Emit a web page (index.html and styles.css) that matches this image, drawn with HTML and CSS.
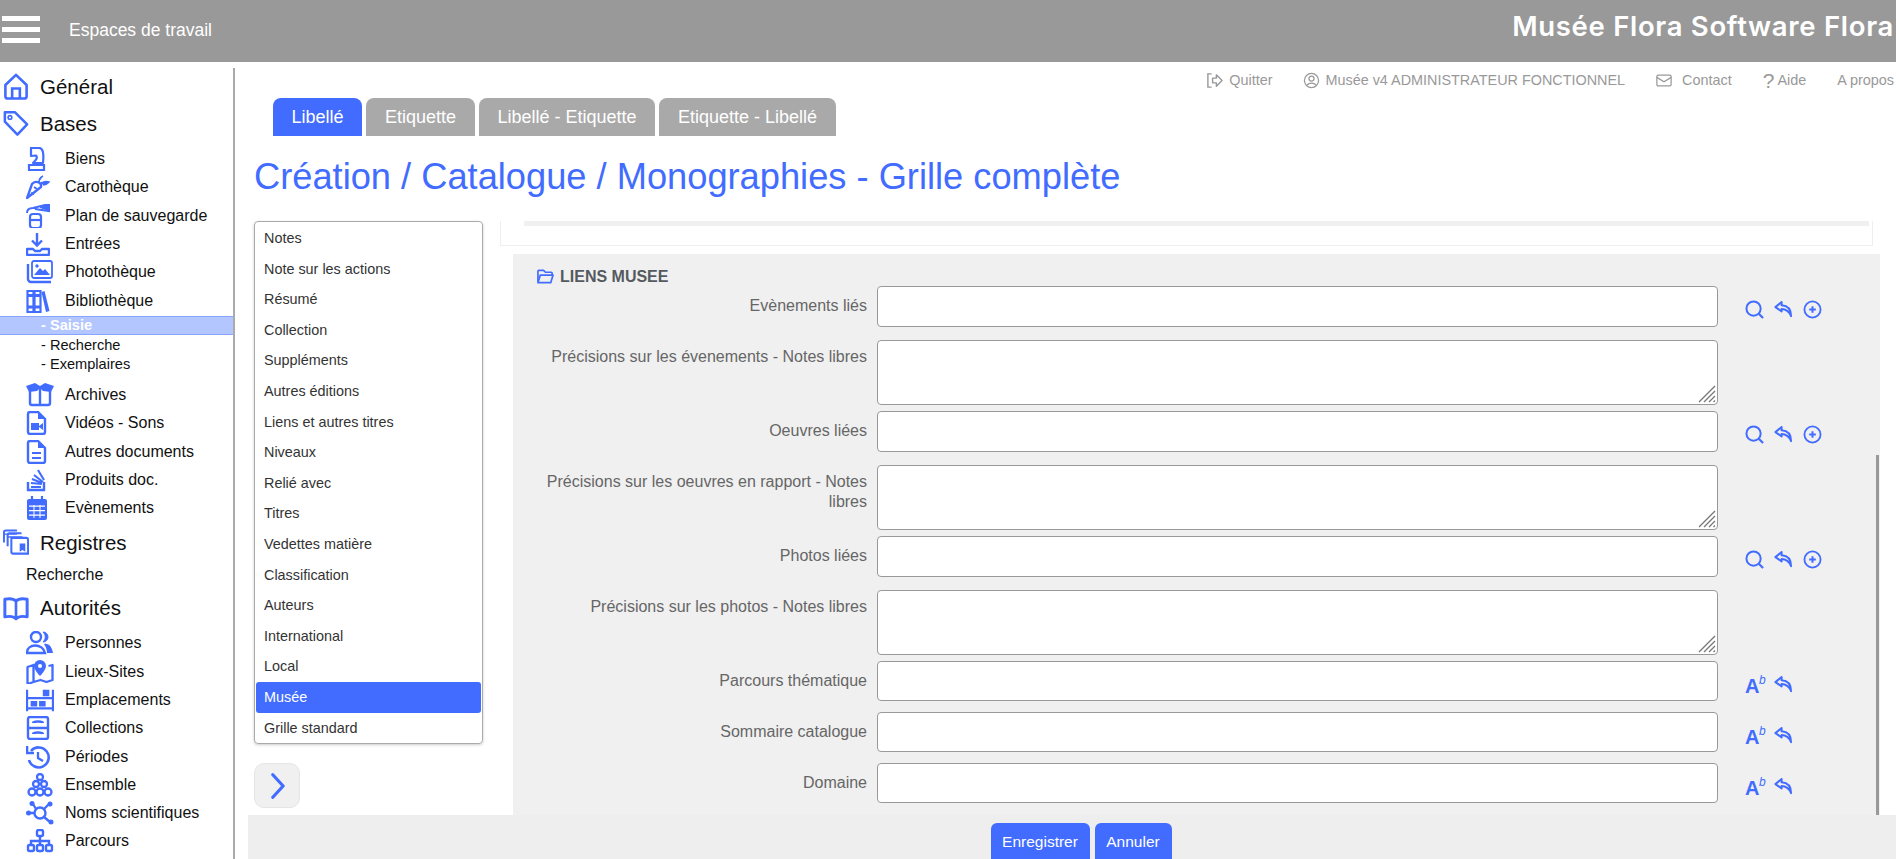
FILE: index.html
```html
<!DOCTYPE html>
<html lang="fr">
<head>
<meta charset="utf-8">
<title>Musée Flora</title>
<link rel="stylesheet" href="styles.css">
</head>
<body>
<svg class="defs" width="0" height="0">
  <symbol id="i-loupe" viewBox="0 0 20 20"><circle cx="9" cy="9" r="7.500" fill="none" stroke="currentColor" stroke-width="2.100"/><path d="M14.500 14.500 19 19" stroke="currentColor" stroke-width="2.400" fill="none"/></symbol>
  <symbol id="i-undo" viewBox="0 0 20 20"><path d="M8 2 1.500 7.500 8 12V9.500c4.500 0 7.500 1.500 10 7.500 0-6.500-3-11-10-11.500Z" fill="none" stroke="currentColor" stroke-width="2.100" stroke-linejoin="round"/></symbol>
  <symbol id="i-plus" viewBox="0 0 20 20"><circle cx="10" cy="10" r="8.500" fill="none" stroke="currentColor" stroke-width="1.900"/><path d="M10 6.500v7M6.500 10h7" stroke="currentColor" stroke-width="2.100"/></symbol>
</svg>

<header class="topbar">
  <div class="burger"><span></span><span></span><span></span></div>
  <div class="workspaces">Espaces de travail</div>
  <div class="brand">Musée Flora Software Flora</div>
</header>

<div class="page">
  <nav class="sidebar">
    <div class="sec">
      <svg class="sec-ico" viewBox="0 0 26 28"><path d="M2 12.500 13 2l11 10.500V24a2.500 2.500 0 0 1-2.500 2.500h-17A2.500 2.500 0 0 1 2 24Z" fill="none" stroke="currentColor" stroke-width="2.700" stroke-linejoin="round"/><path d="M9 26V16h8v10" fill="none" stroke="currentColor" stroke-width="2.700"/></svg>
      <span>Général</span>
    </div>
    <div class="sec">
      <svg class="sec-ico" viewBox="0 0 28 28"><path d="M2 2h11l13 13-10.500 11L2 12Z" fill="none" stroke="currentColor" stroke-width="2.700" stroke-linejoin="round"/><circle cx="7.500" cy="7.500" r="2" fill="none" stroke="currentColor" stroke-width="1.700"/></svg>
      <span>Bases</span>
    </div>
    <ul class="sub s1">
      <li><svg class="ico" viewBox="0 0 24 24"><path d="M5 1h8c4 0 5 5 4 15H7c3-3 5-5 3-7.500L5 9Z" fill="none" stroke="currentColor" stroke-width="2.200" stroke-linejoin="round"/><path d="M3 18h15v5H3Z" fill="none" stroke="currentColor" stroke-width="2.200"/></svg>Biens</li>
      <li><svg class="ico" viewBox="0 0 24 24"><path d="M1 23 6 9c3-4 10-2 9 3Z" fill="none" stroke="currentColor" stroke-width="2.300" stroke-linejoin="round"/><path d="M13 7c0-3 2-5 4-6M15 8c2-1 5-2 8-1-1 1-2 3-6 3" fill="currentColor" stroke="currentColor" stroke-width="1.500"/><path d="M8 12l3 2M5 18l3 1" stroke="currentColor" stroke-width="2" fill="none"/></svg>Carothèque</li>
      <li><svg class="ico" viewBox="0 0 24 24"><rect x="4" y="10" width="11" height="14" rx="3" fill="none" stroke="currentColor" stroke-width="2.200"/><path d="M4 16h11" stroke="currentColor" stroke-width="2.200"/><path d="M1 9c0-4 3-5 6-5l16-4v7L9 5" fill="none" stroke="currentColor" stroke-width="2"/><path d="M14 3l9-3v7l-9-3Z" fill="currentColor"/></svg>Plan de sauvegarde</li>
      <li><svg class="ico" viewBox="0 0 24 24"><path d="M11 1v12M6 8.500l5 5 5-5" fill="none" stroke="currentColor" stroke-width="2.400"/><path d="M1 17h6l2 2h5l2-2h7v5a1 1 0 0 1-1 1H2a1 1 0 0 1-1-1Z" fill="none" stroke="currentColor" stroke-width="2.400" stroke-linejoin="round"/></svg>Entrées</li>
      <li><svg class="ico wide" viewBox="0 0 28 24"><rect x="6" y="1" width="20" height="17" rx="2" fill="none" stroke="currentColor" stroke-width="1.800"/><path d="M8 15l6-7 3 3 2-2 5 6Z" fill="currentColor"/><circle cx="11" cy="6" r="1.700" fill="currentColor"/><path d="M2 4v15a3 3 0 0 0 3 3h20" fill="none" stroke="currentColor" stroke-width="2.400"/></svg>Photothèque</li>
      <li><svg class="ico" viewBox="0 0 24 24"><path d="M1.500 2h6v21h-6ZM8.500 2h6v21h-6Z" fill="none" stroke="currentColor" stroke-width="2.200"/><path d="M1 6.500h14M1 18h14" stroke="currentColor" stroke-width="2.800"/><path d="M15.500 3l3-1 5 20-3.500 1Z" fill="currentColor"/></svg>Bibliothèque</li>
    </ul>
    <ul class="tree">
      <li class="on">- Saisie</li>
      <li>- Recherche</li>
      <li>- Exemplaires</li>
    </ul>
    <ul class="sub s2">
      <li><svg class="ico wide" viewBox="0 0 28 24"><path d="M0 3 9 0l5 3 5-3 9 3-3 6-8-1-3-3-3 3-8 1Z" fill="currentColor"/><path d="M4 8v12a2 2 0 0 0 2 2h16a2 2 0 0 0 2-2V8M14 5v17" fill="none" stroke="currentColor" stroke-width="2.400"/></svg>Archives</li>
      <li><svg class="ico" viewBox="0 0 24 24"><path d="M2 3a2 2 0 0 1 2-2h8l7 7v13a2 2 0 0 1-2 2H4a2 2 0 0 1-2-2Z" fill="none" stroke="currentColor" stroke-width="2.400"/><path d="M12 1v7h7" fill="currentColor"/><path d="M5 12h8v7H5ZM13 15l4-3v7l-4-3Z" fill="currentColor"/></svg>Vidéos - Sons</li>
      <li><svg class="ico" viewBox="0 0 24 24"><path d="M2 3a2 2 0 0 1 2-2h8l7 7v13a2 2 0 0 1-2 2H4a2 2 0 0 1-2-2Z" fill="none" stroke="currentColor" stroke-width="2.400"/><path d="M12 1v7h7" fill="currentColor"/><path d="M6 13h9M6 18h9" stroke="currentColor" stroke-width="2.200"/></svg>Autres documents</li>
      <li><svg class="ico" viewBox="0 0 24 24"><path d="M2 14v8h16v-8" fill="none" stroke="currentColor" stroke-width="2.400"/><path d="M5 19h10M5 15l11 1M6 11l10 4M8 7l9 7M12 2l6 10" stroke="currentColor" stroke-width="2.100" fill="none"/></svg>Produits doc.</li>
      <li><svg class="ico" viewBox="0 0 24 24"><path d="M1 5a2 2 0 0 1 2-2h16a2 2 0 0 1 2 2v17a2 2 0 0 1-2 2H3a2 2 0 0 1-2-2Z" fill="currentColor"/><path d="M6 0v5M16 0v5" stroke="currentColor" stroke-width="2.200"/><path d="M3 9.500h16v1.200H3ZM3 14h16v1.200H3ZM3 18.500h16v1.200H3ZM7.500 9h1v13h-1ZM13.500 9h1v13h-1Z" fill="#fff"/></svg>Evènements</li>
    </ul>
    <div class="sec sec-reg">
      <svg class="sec-ico" viewBox="0 0 28 28"><path d="M1 14V3a2 2 0 0 1 2-2h12M5 18V6a2 2 0 0 1 2-2h13M9 9h16a2 2 0 0 1 2 2v15H11a2 2 0 0 1-2-2Z" fill="none" stroke="currentColor" stroke-width="2.200"/><path d="M5 8h16M1 5h14" stroke="currentColor" stroke-width="1.500"/><path d="M18 15h6v9l-3-2-3 2Z" fill="currentColor"/></svg>
      <span>Registres</span>
    </div>
    <div class="plain">Recherche</div>
    <div class="sec sec-aut">
      <svg class="sec-ico" viewBox="0 0 28 26"><path d="M2 3c5-1 9-1 12 2 3-3 7-3 12-2v19c-5-1-9-1-12 2-3-3-7-3-12-2Z" fill="none" stroke="currentColor" stroke-width="3.200" stroke-linejoin="round"/><path d="M14 5v19" stroke="currentColor" stroke-width="2.800"/></svg>
      <span>Autorités</span>
    </div>
    <ul class="sub s3">
      <li><svg class="ico wide" viewBox="0 0 28 24"><circle cx="10" cy="6" r="5" fill="none" stroke="currentColor" stroke-width="2.400"/><path d="M17 1a5 5 0 0 1 0 10c3-3 3-7 0-10Z" fill="currentColor" stroke="currentColor"/><path d="M1 22c0-10 16-10 18 0Z" fill="none" stroke="currentColor" stroke-width="2.400"/><path d="M18 13c5-1 8 3 9 9h-6c0-3-1-6-3-9Z" fill="currentColor"/></svg>Personnes</li>
      <li><svg class="ico wide" viewBox="0 0 28 24"><path d="M1.500 7l6-2v17l-6 2ZM7.500 22l7-2 6 2 6-2V5l-4 1M7.500 5l3 1" fill="none" stroke="currentColor" stroke-width="2.300" stroke-linejoin="round"/><path d="M14 0a6 6 0 0 1 6 6c0 4-6 10-6 10S8 10 8 6a6 6 0 0 1 6-6Z" fill="currentColor"/><circle cx="14" cy="6" r="2" fill="#fff"/></svg>Lieux-Sites</li>
      <li><svg class="ico wide" viewBox="0 0 30 24"><path d="M1 1v23M29 1v23M1 10h28M1 21h28" stroke="currentColor" stroke-width="2.600" fill="none"/><path d="M5 13h7v6H5ZM14 13h7v6h-7ZM18 1h7v7h-7Z" fill="currentColor"/></svg>Emplacements</li>
      <li><svg class="ico" viewBox="0 0 24 24"><rect x="2" y="1" width="20" height="22" rx="2" fill="none" stroke="currentColor" stroke-width="2.400"/><path d="M2 12h20M7 7c0-2 10-2 10 0M7 18c0-2 10-2 10 0" fill="none" stroke="currentColor" stroke-width="2.300"/></svg>Collections</li>
      <li><svg class="ico" viewBox="0 0 24 24"><path d="M5 6a10 10 0 1 1-2 9" fill="none" stroke="currentColor" stroke-width="2.600"/><path d="M1 1v7h7" fill="none" stroke="currentColor" stroke-width="2.600"/><path d="M12 7v6l5 3" fill="none" stroke="currentColor" stroke-width="2.300"/></svg>Périodes</li>
      <li><svg class="ico wide" viewBox="0 0 26 24"><g fill="none" stroke="currentColor" stroke-width="2.300"><circle cx="13" cy="4" r="3"/><circle cx="9" cy="11" r="3"/><circle cx="17" cy="11" r="3"/><circle cx="5" cy="19" r="3.500"/><circle cx="13" cy="19" r="3.500"/><circle cx="21" cy="19" r="3.500"/></g></svg>Ensemble</li>
      <li><svg class="ico wide" viewBox="0 0 28 24"><circle cx="14" cy="12" r="5.500" fill="none" stroke="currentColor" stroke-width="2.400"/><path d="M3 12h6M10 8 7 3M18 8l5-5M18 16l6 5" stroke="currentColor" stroke-width="2.300"/><circle cx="2.500" cy="12" r="2.500" fill="currentColor"/><circle cx="6" cy="2.500" r="2.500" fill="currentColor"/><circle cx="24" cy="3" r="2.500" fill="currentColor"/><circle cx="25" cy="21" r="2.500" fill="currentColor"/></svg>Noms scientifiques</li>
      <li><svg class="ico wide" viewBox="0 0 26 24"><g fill="none" stroke="currentColor" stroke-width="2.400"><rect x="10" y="1" width="6" height="6" rx="1.500"/><rect x="1" y="16" width="6" height="6" rx="1.500"/><rect x="10" y="16" width="6" height="6" rx="1.500"/><rect x="19" y="16" width="6" height="6" rx="1.500"/><path d="M13 7v9M4 16v-4h18v4"/></g></svg>Parcours</li>
    </ul>
  </nav>

  <main class="main">
    <div class="toplinks">
      <span class="tl"><svg class="tl-ico quit" viewBox="0 0 18 18"><path d="M6 2H2v14h4" fill="none" stroke="currentColor" stroke-width="1.500"/><path d="M7 6.500h4V3l6 6-6 6v-3.500H7Z" fill="none" stroke="currentColor" stroke-width="1.500" stroke-linejoin="round"/></svg>Quitter</span>
      <span class="tl"><svg class="tl-ico" viewBox="0 0 18 18"><circle cx="9" cy="9" r="7.500" fill="none" stroke="currentColor" stroke-width="1.300"/><circle cx="9" cy="7" r="2.700" fill="none" stroke="currentColor" stroke-width="1.300"/><path d="M4.500 14c1-3 8-3 9 0" fill="none" stroke="currentColor" stroke-width="1.300"/></svg>Musée v4 ADMINISTRATEUR FONCTIONNEL</span>
      <span class="tl"><svg class="tl-ico mail" viewBox="0 0 18 14"><rect x="1" y="1" width="16" height="12" rx="1.500" fill="none" stroke="currentColor" stroke-width="1.400"/><path d="M1 3.500 9 8.500l8-5" fill="none" stroke="currentColor" stroke-width="1.400"/></svg>Contact</span>
      <span class="tl"><span class="q">?</span>Aide</span>
      <span class="tl">A propos</span>
    </div>

    <div class="tabs">
      <span class="tab on">Libellé</span>
      <span class="tab t2">Etiquette</span>
      <span class="tab t3">Libellé - Etiquette</span>
      <span class="tab t4">Etiquette - Libellé</span>
    </div>

    <h1 class="title">Création / Catalogue / Monographies - Grille complète</h1>

    <div class="work">
      <aside class="leftcol">
        <ul class="list">
          <li>Notes</li><li>Note sur les actions</li><li>Résumé</li><li>Collection</li><li>Suppléments</li>
          <li>Autres éditions</li><li>Liens et autres titres</li><li>Niveaux</li><li>Relié avec</li><li>Titres</li>
          <li>Vedettes matière</li><li>Classification</li><li>Auteurs</li><li>International</li><li>Local</li>
          <li class="on">Musée</li><li>Grille standard</li>
        </ul>
        <div class="next"><svg viewBox="0 0 16 28" width="15" height="28"><path d="M3 2l11 12L3 26" fill="none" stroke="currentColor" stroke-width="3.400" stroke-linecap="round" stroke-linejoin="round"/></svg></div>
      </aside>

      <section class="right">
        <div class="prevbox"><div class="prevbar"></div></div>
        <div class="panel">
          <div class="legend"><svg class="folder" viewBox="0 0 18 15"><path d="M1 13V2a1 1 0 0 1 1-1h5l2 2h6a1 1 0 0 1 1 1v2" fill="none" stroke="currentColor" stroke-width="1.800"/><path d="M1 14l2.500-8H17l-2.500 8Z" fill="none" stroke="currentColor" stroke-width="1.800" stroke-linejoin="round"/></svg>LIENS MUSEE</div>
          <div class="scroll"></div>

          <div class="row"><label>Evènements liés</label><div class="field"></div>
            <div class="acts"><svg><use href="#i-loupe"/></svg><svg><use href="#i-undo"/></svg><svg><use href="#i-plus"/></svg></div></div>
          <div class="row ta"><label>Précisions sur les évenements - Notes libres</label><div class="field area"><svg class="grip" viewBox="0 0 18 18"><path d="M1 17 17 1M6 17 17 6M11 17l6-6M15.500 17 17 15.500" stroke="#777" stroke-width="1.300"/></svg></div></div>
          <div class="row"><label>Oeuvres liées</label><div class="field"></div>
            <div class="acts"><svg><use href="#i-loupe"/></svg><svg><use href="#i-undo"/></svg><svg><use href="#i-plus"/></svg></div></div>
          <div class="row ta"><label>Précisions sur les oeuvres en rapport - Notes libres</label><div class="field area"><svg class="grip" viewBox="0 0 18 18"><path d="M1 17 17 1M6 17 17 6M11 17l6-6M15.500 17 17 15.500" stroke="#777" stroke-width="1.300"/></svg></div></div>
          <div class="row"><label>Photos liées</label><div class="field"></div>
            <div class="acts"><svg><use href="#i-loupe"/></svg><svg><use href="#i-undo"/></svg><svg><use href="#i-plus"/></svg></div></div>
          <div class="row ta"><label>Précisions sur les photos - Notes libres</label><div class="field area"><svg class="grip" viewBox="0 0 18 18"><path d="M1 17 17 1M6 17 17 6M11 17l6-6M15.500 17 17 15.500" stroke="#777" stroke-width="1.300"/></svg></div></div>
          <div class="row s"><label>Parcours thématique</label><div class="field"></div>
            <div class="acts"><span class="ab">A<i>b</i></span><svg><use href="#i-undo"/></svg></div></div>
          <div class="row s"><label>Sommaire catalogue</label><div class="field"></div>
            <div class="acts"><span class="ab">A<i>b</i></span><svg><use href="#i-undo"/></svg></div></div>
          <div class="row s"><label>Domaine</label><div class="field"></div>
            <div class="acts"><span class="ab">A<i>b</i></span><svg><use href="#i-undo"/></svg></div></div>
        </div>
      </section>
    </div>

    <footer class="foot">
      <span class="btn b1">Enregistrer</span>
      <span class="btn b2">Annuler</span>
    </footer>
  </main>
</div>
</body>
</html>
```

FILE: styles.css
```css
* { box-sizing: border-box; }
html, body { margin: 0; height: 859px; overflow: hidden; background: #fff; }
body { font-family: "Liberation Sans", Arial, sans-serif; color: #111; display: flex; flex-direction: column; }
.defs { position: absolute; }
ul { list-style: none; margin: 0; padding: 0; }

.topbar { height: 62px; flex: none; background: #999; color: #fff; display: flex; align-items: center; padding: 0 2px; overflow: hidden; }
.burger { width: 38px; display: flex; flex-direction: column; gap: 6px; margin-top: -4px; }
.burger span { display: block; height: 5px; background: #fff; }
.workspaces { font-size: 17.500px; margin-left: 29px; margin-top: -2px; }
.brand { margin-left: auto; font-family: Inter, sans-serif; font-weight: 600; font-size: 27.500px; letter-spacing: 0.700px; white-space: nowrap; margin-top: -10px; }

.page { flex: 1; display: flex; min-height: 0; }
.sidebar { width: 235px; flex: none; height: 791px; margin-top: 6px; border-right: 2px solid #aaa; overflow: hidden; color: #111; }
.sec { height: 37px; display: flex; align-items: center; font-size: 20.500px; gap: 11px; padding-left: 3px; color: #111; }
.sec-ico { width: 26px; height: 27px; color: #416cff; flex: none; }
.sec-reg { margin-top: 2px; }
.sec-aut { height: 34px; margin-top: 2px; }
.sub li { height: 28.300px; display: flex; align-items: center; font-size: 16px; padding-left: 26px; white-space: nowrap; }
.s1 { margin-top: 3px; }
.s2 { margin-top: 7px; }
.s3 { margin-top: 4px; }
.ico { width: 24px; height: 24px; color: #416cff; margin-right: 15px; flex: none; }
.ico.wide { width: 28px; margin-right: 11px; }
.tree { font-size: 14.600px; margin-top: 1px; }
.tree li { height: 19px; line-height: 19px; padding-left: 41px; }
.tree li.on { background: #b3c6ff; border-top: 1px solid #8aa5ff; border-bottom: 1px solid #8aa5ff; color: #fff; font-weight: 700; line-height: 17px; margin-bottom: 1px; }
.plain { font-size: 16px; height: 28px; line-height: 28px; padding-left: 26px; }

.main { flex: 1; min-width: 0; display: flex; flex-direction: column; }
.toplinks { height: 36px; flex: none; display: flex; justify-content: flex-end; align-items: center; gap: 31px; font-size: 14.400px; color: #999; white-space: nowrap; overflow: hidden; padding-right: 2px; }
.tl { display: inline-flex; align-items: center; }
.tl-ico { width: 17px; height: 17px; margin-right: 5px; }
.tl-ico.quit { margin-right: 6px; }
.tl-ico.mail { width: 16px; height: 13px; margin-right: 10px; }
.q { font-size: 21px; margin-right: 3px; line-height: 1; }

.tabs { height: 38px; flex: none; display: flex; gap: 4px; padding-left: 38px; }
.tab { background: #a9a9a9; color: #fff; font-size: 18px; display: flex; align-items: center; justify-content: center; border-radius: 8px 8px 0 0; padding-top: 1px; }
.tab.on { background: #416cff; width: 89px; }
.t2 { width: 109px; }
.t3 { width: 176px; }
.t4 { width: 177px; }

.title { margin: 0 0 0 19px; height: 85px; flex: none; font-weight: 400; font-size: 36.250px; line-height: 82px; color: #416cff; white-space: nowrap; }

.work { flex: 1; display: flex; min-height: 0; padding-left: 19px; }
.leftcol { width: 229px; flex: none; }
.list { height: 523px; border: 1px solid #aaa; border-radius: 4px; box-shadow: 0 1px 3px rgba(0,0,0,.2); padding: 1px; font-size: 14.400px; color: #333; }
.list li { height: 30.600px; line-height: 30.600px; padding-left: 8px; }
.list li.on { background: #416cff; color: #fff; border-radius: 3px; }
.next { width: 46px; height: 45px; margin-top: 19px; background: #f0f0f0; border: 1px solid #e5e5e5; border-radius: 10px; color: #416cff; display: flex; align-items: center; justify-content: center; }

.right { flex: 1; min-width: 0; padding-left: 17px; }
.prevbox { height: 25px; margin-right: 23px; border: 1px solid #eee; border-top: 0; padding: 0 3px 0 23px; }
.prevbar { height: 5px; background: #f0f0f0; }
.panel { position: relative; height: 561px; margin: 8px 16px 0 13px; background: #f0f0f0; padding-top: 13px; }
.legend { height: 19px; display: flex; align-items: center; font-size: 16px; font-weight: 700; color: #555a60; padding-left: 24px; }
.folder { width: 17px; height: 15px; color: #416cff; margin-right: 6px; }
.scroll { position: absolute; right: 1px; top: 201px; bottom: 0; width: 3px; background: #999; }

.row { display: flex; align-items: flex-start; height: 41px; margin-bottom: 13px; }
.row.ta { height: 65px; margin-bottom: 6px; }
.row.s { height: 40px; margin-bottom: 11px; }
.row label { width: 364px; flex: none; padding: 10px 10px 0 20px; text-align: right; font-size: 16px; line-height: 20px; color: #666; }
.row.ta label { padding-top: 7px; line-height: 19.500px; }
.field { width: 841px; flex: none; height: 100%; background: #fff; border: 1px solid #999; border-radius: 4px; position: relative; }
.grip { position: absolute; right: 1px; bottom: 1px; width: 18px; height: 18px; }
.acts { display: flex; align-items: center; gap: 10px; margin-left: 27px; margin-top: 12px; color: #416cff; height: 22px; }
.acts svg { width: 19px; height: 19px; }
.ab { width: 19px; font-size: 20px; font-weight: 700; line-height: 20px; position: relative; margin-top: 3px; }
.ab i { position: absolute; left: 14px; top: -6px; font-size: 12px; font-weight: 400; }

.foot { height: 44px; flex: none; margin-left: 13px; margin-top: auto; background: #eee; display: flex; justify-content: center; gap: 5px; padding: 8px 0 0 18px; overflow: hidden; }
.btn { background: #416cff; color: #fff; font-size: 15.500px; border-radius: 6px 6px 0 0; height: 40px; display: flex; align-items: center; justify-content: center; padding-bottom: 2px; }
.b1 { width: 99px; }
.b2 { width: 77px; }
```
